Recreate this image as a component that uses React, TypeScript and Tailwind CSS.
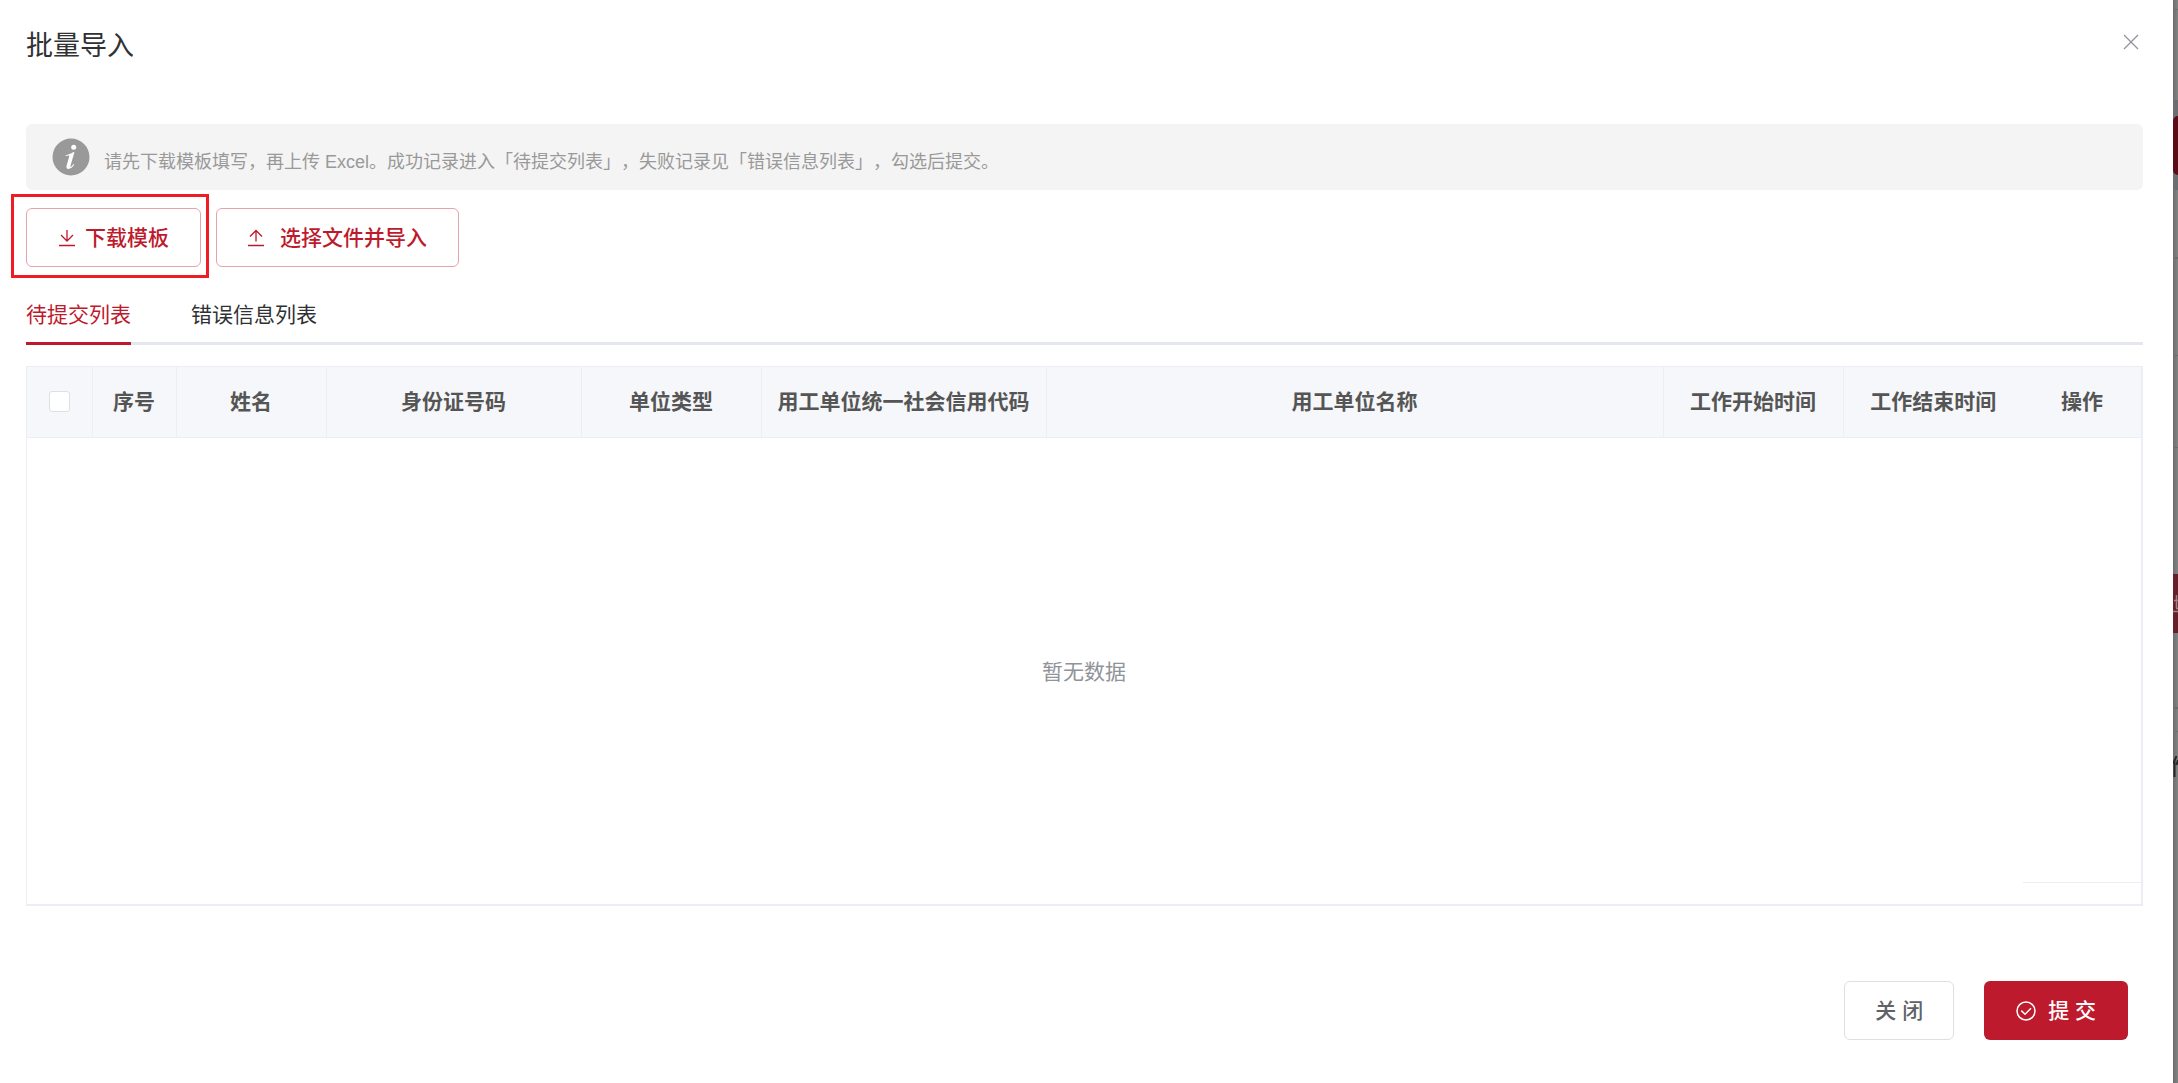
import { useState } from 'react'

interface Column {
    title: string
    width: string
}

const columns: Column[] = [
    { title: '序号', width: 'w-[84px]' },
    { title: '姓名', width: 'w-[150px]' },
    { title: '身份证号码', width: 'w-[255px]' },
    { title: '单位类型', width: 'w-[180px]' },
    { title: '用工单位统一社会信用代码', width: 'w-[285px]' },
    { title: '用工单位名称', width: '' },
    { title: '工作开始时间', width: 'w-[180px]' },
    { title: '工作结束时间', width: 'w-[180px]' },
]

const tabs = ['待提交列表', '错误信息列表']

function InfoIcon() {
    return (
        <svg viewBox="0 0 38 38" className="h-[38px] w-[38px] shrink-0" aria-hidden="true">
            <circle cx="19" cy="19" r="18.5" fill="#999999" />
            <circle cx="21.7" cy="9.2" r="2.5" fill="#fff" />
            <path
                d="M13.500 17.200c2.900-.4 5.200-1.500 8-3.200l.9.300-3.900 13.500c-.3 1.100 0 1.400.5 1 .9-.6 1.700-1.600 2.500-2.700l.7.500c-1.700 2.900-3.700 4.400-5.800 4.400-1.700 0-2.300-1.200-1.800-3.200l2.600-9.300c.2-.7 0-.9-.7-.9-.8 0-1.800.3-2.700.5z"
                fill="#fff"
            />
        </svg>
    )
}

function DownloadIcon() {
    return (
        <svg viewBox="0 0 16 18" className="h-[18px] w-4" fill="none" stroke="currentColor" strokeWidth="1.3" aria-hidden="true">
            <path d="M8 1v11M2 6l6 6 6-6M0 16.500h16" />
        </svg>
    )
}

function UploadIcon() {
    return (
        <svg viewBox="0 0 16 18" className="h-[18px] w-4" fill="none" stroke="currentColor" strokeWidth="1.3" aria-hidden="true">
            <path d="M8 12.500V1.500M2 7.500l6-6 6 6M0 16.500h16" />
        </svg>
    )
}

function CheckIcon() {
    return (
        <svg viewBox="0 0 20 20" className="h-5 w-5" fill="none" stroke="currentColor" strokeWidth="1.5" aria-hidden="true">
            <circle cx="10" cy="10" r="9" />
            <path d="M5.300 9.600l3.700 3.600 6-6" />
        </svg>
    )
}

// Dimmed edge of the page under the drawer
function PageBehind() {
    return (
        <div className="flex w-[5px] shrink-0 flex-col overflow-hidden bg-linear-to-r from-[#6c6d6d] to-[#828383]" aria-hidden="true">
            <div className="h-[10px] border-b border-[#6e6e6e]" />
            <div className="h-[90px]" />
            <div className="flex h-[90px] flex-col justify-center bg-[#6a6e70]">
                <div className="h-[59px] w-5 rounded-l-[5px] bg-[#5a0c17]" />
            </div>
            <div className="h-[166px] border-b border-[#6e6e6e]">
                <div className="h-[69px] border-b-2 border-[#6e6e6e]" />
            </div>
            <div className="h-[92px] border-b border-[#6e6e6e]" />
            <div className="h-[126px]" />
            <div className="flex h-[59px] items-center bg-[#66202a]">
                <svg viewBox="0 0 5 20" className="h-5 w-[5px]" fill="none" stroke="#a08286" strokeWidth="1.5">
                    <path d="M3.500 1v5M1 6.500h4M3.500 7v7M3 14.500h2M0 17.500h5" />
                </svg>
            </div>
            <div className="h-[76px] border-b-2 border-[#6b6b71]" />
            <div className="h-[23px] border-b border-[#717171]" />
            <svg viewBox="0 0 5 22" className="mt-6 h-[22px] w-[5px]" fill="none" stroke="#262626" strokeWidth="2">
                <path d="M3.500 0L0 8M1.500 5v16M5 4L3.500 9" />
            </svg>
        </div>
    )
}

export default function App() {
    const [activeTab, setActiveTab] = useState(0)

    return (
        <div className="flex min-h-screen bg-white font-['Liberation_Sans','Noto_Sans_CJK_SC',sans-serif] text-[21px] leading-8">
            <main className="flex min-w-0 flex-1 flex-col pl-[26px]">
                <header className="flex items-start justify-between pt-[26px] pr-[26px]">
                    <h1 className="text-[27px] leading-10 text-[#303133]">批量导入</h1>
                    <button type="button" aria-label="关闭对话框" className="p-2 text-[#909399]">
                        <svg viewBox="0 0 16 16" className="h-4 w-4" fill="none" stroke="currentColor" strokeWidth="1.3">
                            <path d="M1 1l14 14M15 1L1 15" />
                        </svg>
                    </button>
                </header>

                <section className="mt-[58px] mr-[30px] flex h-[66px] items-center gap-[14px] rounded-md bg-[#f4f4f4] px-[26px] text-lg text-[#999999]">
                    <InfoIcon />
                    <p className="pt-[10px] [text-spacing-trim:space-all]">
                        请先下载模板填写，再上传 Excel。成功记录进入「待提交列表」，失败记录见「错误信息列表」，勾选后提交。
                    </p>
                </section>

                <div className="mt-[18px] flex gap-[15px] font-medium text-[#bd1a2d]">
                    <div className="relative">
                        <button type="button" className="flex h-[59px] items-center gap-[10px] rounded-md border border-[#e5a3ab] pr-[31px] pl-8">
                            <DownloadIcon />
                            下载模板
                        </button>
                        <div className="pointer-events-none absolute -top-[14px] -right-2 -bottom-[11px] -left-[15px] border-3 border-[#f01c24]" />
                    </div>
                    <button type="button" className="flex h-[59px] items-center gap-4 rounded-md border border-[#e5a3ab] px-[31px]">
                        <UploadIcon />
                        选择文件并导入
                    </button>
                </div>

                <div role="tablist" className="mt-8 mr-[30px] flex gap-[60px] border-b-3 border-[#e4e7ed]">
                    {tabs.map((tab, index) => (
                        <button
                            key={tab}
                            type="button"
                            role="tab"
                            aria-selected={activeTab === index}
                            onClick={() => setActiveTab(index)}
                            className={`-mb-[3px] border-b-3 pb-[11px] ${
                                activeTab === index ? 'border-[#bd1a2d] text-[#bd1a2d]' : 'border-transparent text-[#303133]'
                            }`}
                        >
                            {tab}
                        </button>
                    ))}
                </div>

                <div className="mt-[21px] mr-[30px] border-t border-r-2 border-b-2 border-l border-[#ebeef5]">
                    <table className="w-full table-fixed border-collapse">
                        <thead className="bg-[#f5f7fa]">
                            <tr className="h-[70px] border-b border-[#ebeef5] text-[#555555]">
                                <th className="w-[65px] border-r border-[#ebeef5]">
                                    <input
                                        type="checkbox"
                                        aria-label="全选"
                                        className="mx-auto block h-[21px] w-[21px] appearance-none rounded-[3px] border border-[#dcdfe6] bg-white"
                                    />
                                </th>
                                {columns.map((column, index) => (
                                    <th
                                        key={column.title}
                                        className={`${column.width} ${index < columns.length - 1 ? 'border-r border-[#ebeef5]' : ''} whitespace-nowrap font-bold`}
                                    >
                                        {column.title}
                                    </th>
                                ))}
                                <th className="w-[118px] font-bold">操作</th>
                            </tr>
                        </thead>
                        <tbody>
                            <tr className="h-[445px]">
                                <td colSpan={10} className="pt-6 text-center text-[#909399]">
                                    暂无数据
                                </td>
                            </tr>
                        </tbody>
                        <tfoot>
                            <tr className="h-[22px]">
                                <td colSpan={9} />
                                <td className="border-t border-[#ebeef5]" />
                            </tr>
                        </tfoot>
                    </table>
                </div>

                <footer className="mt-[75px] mr-[45px] mb-[43px] flex justify-end gap-[30px] font-medium">
                    <button type="button" className="h-[59px] rounded-md border border-[#dcdfe6] px-[30px] text-[#606266]">
                        关 闭
                    </button>
                    <button type="button" className="flex h-[59px] items-center gap-3 rounded-md bg-[#bd1a2d] px-8 text-white">
                        <CheckIcon />
                        提 交
                    </button>
                </footer>
            </main>
            <PageBehind />
        </div>
    )
}
